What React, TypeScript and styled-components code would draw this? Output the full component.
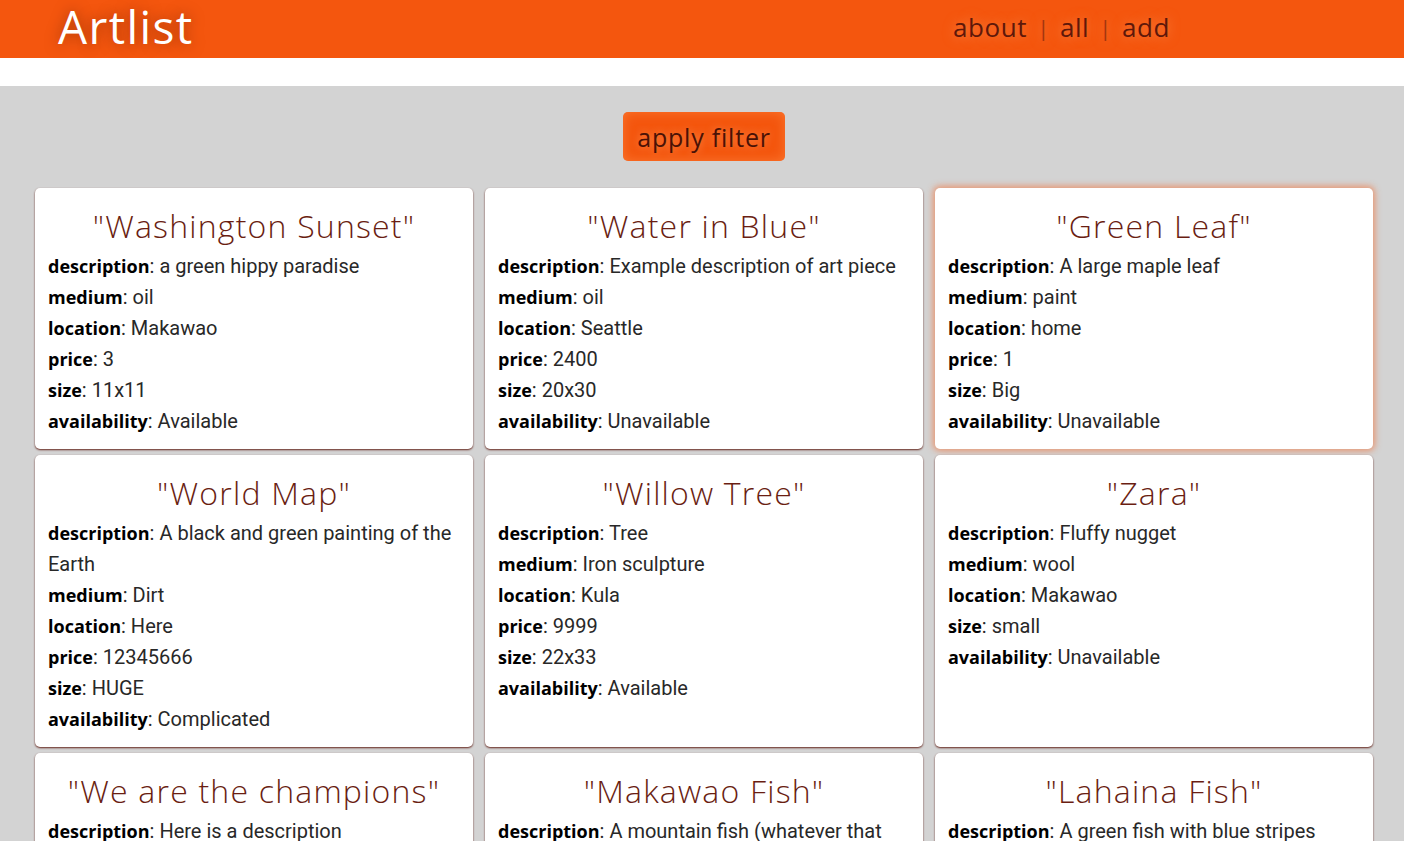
import React from "react";
import styled, { createGlobalStyle } from "styled-components";

const GlobalStyle = createGlobalStyle`
  html, body {
    margin: 0;
    padding: 0;
    background: #d3d3d3;
  }
  body {
    font-family: Roboto, "Liberation Sans", sans-serif;
  }
`;

const orange = "#f4560e";
const rust = "#6a1e12";
const display = `"Open Sans", "Noto Sans", sans-serif`;

const Header = styled.header`
  display: flex;
  align-items: center;
  justify-content: space-between;
  height: 58px;
  padding: 0 234px 0 58px;
  background-color: ${orange};
`;

const Logo = styled.h1`
  margin: -6px 0 0;
  font-family: ${display};
  font-weight: 400;
  font-size: 46px;
  letter-spacing: 1.4px;
  line-height: 1;
  color: #fff;
  text-shadow: 0 0 14px rgba(90, 25, 0, 0.55);
`;

const Nav = styled.nav`
  display: flex;
  align-items: center;
  gap: 10px;
  margin-top: -4px;
  font-family: ${display};
  font-size: 26px;
  letter-spacing: 0.6px;
  color: #5e180a;
  text-shadow: 0 0 12px rgba(255, 160, 100, 0.7);
`;

const NavLink = styled.a`
  color: inherit;
  text-decoration: none;
  cursor: pointer;
`;

const Sep = styled.span`
  font-size: 22px;
  color: #a3360f;
`;

const Spacer = styled.div`
  height: 28px;
  background: #fff;
`;

const Main = styled.main`
  display: flex;
  flex-direction: column;
  align-items: center;
  padding: 26px 31px 40px 35px;
`;

const FilterButton = styled.button`
  width: 162px;
  height: 49px;
  margin-bottom: 27px;
  border: none;
  border-radius: 5px;
  background: ${orange};
  box-shadow: inset 0 0 12px rgba(255, 140, 70, 0.6);
  font-family: ${display};
  font-size: 25px;
  letter-spacing: 0.8px;
  color: #4a1206;
  text-shadow: 0 0 8px rgba(255, 150, 90, 0.9);
  cursor: pointer;
`;

const Grid = styled.div`
  display: grid;
  grid-template-columns: repeat(3, 438px);
  column-gap: 12px;
  row-gap: 6px;
`;

const Card = styled.div<{ $hover?: boolean }>`
  background: #fff;
  border-radius: 5px;
  padding: 19px 13px 12px;
  box-shadow: ${(p) =>
    p.$hover
      ? "0 0 6px 2px rgba(240, 130, 80, 0.75)"
      : "0 1px 2px rgba(90, 20, 10, 0.9)"};
`;

const Title = styled.h2`
  margin: 0 0 7px;
  text-align: center;
  font-family: ${display};
  font-weight: 300;
  font-size: 32px;
  letter-spacing: 1.2px;
  line-height: 37px;
  color: ${rust};
`;

const Field = styled.div`
  font-size: 20px;
  line-height: 31px;
  color: #282828;
`;

const Label = styled.b`
  font-family: ${display};
  font-weight: 700;
  font-size: 18px;
  color: #000;
`;

type Art = {
  title: string;
  hover?: boolean;
  fields: [string, string][];
};

const arts: Art[] = [
  {
    title: "Washington Sunset",
    fields: [
      ["description", "a green hippy paradise"],
      ["medium", "oil"],
      ["location", "Makawao"],
      ["price", "3"],
      ["size", "11x11"],
      ["availability", "Available"],
    ],
  },
  {
    title: "Water in Blue",
    fields: [
      ["description", "Example description of art piece"],
      ["medium", "oil"],
      ["location", "Seattle"],
      ["price", "2400"],
      ["size", "20x30"],
      ["availability", "Unavailable"],
    ],
  },
  {
    title: "Green Leaf",
    hover: true,
    fields: [
      ["description", "A large maple leaf"],
      ["medium", "paint"],
      ["location", "home"],
      ["price", "1"],
      ["size", "Big"],
      ["availability", "Unavailable"],
    ],
  },
  {
    title: "World Map",
    fields: [
      ["description", "A black and green painting of the Earth"],
      ["medium", "Dirt"],
      ["location", "Here"],
      ["price", "12345666"],
      ["size", "HUGE"],
      ["availability", "Complicated"],
    ],
  },
  {
    title: "Willow Tree",
    fields: [
      ["description", "Tree"],
      ["medium", "Iron sculpture"],
      ["location", "Kula"],
      ["price", "9999"],
      ["size", "22x33"],
      ["availability", "Available"],
    ],
  },
  {
    title: "Zara",
    fields: [
      ["description", "Fluffy nugget"],
      ["medium", "wool"],
      ["location", "Makawao"],
      ["size", "small"],
      ["availability", "Unavailable"],
    ],
  },
  {
    title: "We are the champions",
    fields: [
      ["description", "Here is a description"],
      ["medium", "vinyl"],
      ["location", "London"],
      ["price", "1977"],
      ["size", "12in"],
      ["availability", "Available"],
    ],
  },
  {
    title: "Makawao Fish",
    fields: [
      ["description", "A mountain fish (whatever that means)"],
      ["medium", "watercolor"],
      ["location", "Makawao"],
      ["price", "150"],
      ["size", "8x10"],
      ["availability", "Available"],
    ],
  },
  {
    title: "Lahaina Fish",
    fields: [
      ["description", "A green fish with blue stripes"],
      ["medium", "acrylic"],
      ["location", "Lahaina"],
      ["price", "200"],
      ["size", "16x20"],
      ["availability", "Available"],
    ],
  },
];

const ArtCard = ({ art }: { art: Art }) => (
  <Card $hover={art.hover}>
    <Title>"{art.title}"</Title>
    {art.fields.map(([k, v]) => (
      <Field key={k}>
        <Label>{k}</Label>: {v}
      </Field>
    ))}
  </Card>
);

export default function App() {
  return (
    <>
      <GlobalStyle />
      <Header>
        <Logo>Artlist</Logo>
        <Nav>
          <NavLink>about</NavLink>
          <Sep>|</Sep>
          <NavLink>all</NavLink>
          <Sep>|</Sep>
          <NavLink>add</NavLink>
        </Nav>
      </Header>
      <Spacer />
      <Main>
        <FilterButton>apply filter</FilterButton>
        <Grid>
          {arts.map((a) => (
            <ArtCard key={a.title} art={a} />
          ))}
        </Grid>
      </Main>
    </>
  );
}
